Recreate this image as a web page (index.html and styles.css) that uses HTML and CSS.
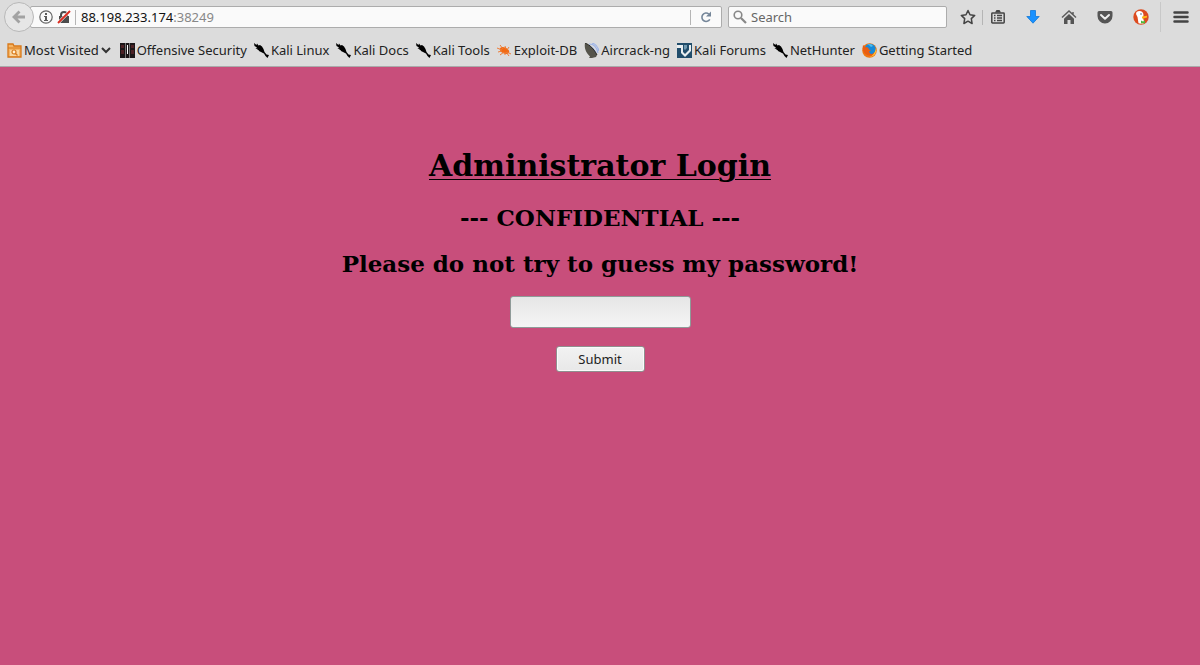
FILE: index.html
```
<!DOCTYPE html>
<html lang="en">
    <head>
        <meta charset="UTF-8">
        <title>Administrator Login</title>
        <link rel="stylesheet" href="styles.css">
    </head>
    <body>
        <svg class="sprite" aria-hidden="true">
            <symbol id="kali" viewBox="0 0 15 15">
                <path d="M0 0l2.500 2L3 .500l1.500 2L6 2l2 1.500L9.500 6l1 3 2 2.500 2.500.500-1.500 3-2-2-1.500-2.500-3-1.500-2-1-.500-1L3 7l1-1-2.500-.500L3 4.500.500 3z"/>
            </symbol>
        </svg>

        <header class="browser">
        <div class="toolbar">
            <button class="back" aria-label="Back">
                <svg width="16" height="16" viewBox="0 0 16 16"><path d="M8.500 2.500L3 8l5.500 5.500M3.500 8H14" fill="none" stroke="#a2a2a2" stroke-width="2.800"/></svg>
            </button>
            <div class="address">
                <svg width="14" height="14" viewBox="0 0 14 14"><circle cx="7" cy="7" r="6.200" fill="none" stroke="#666" stroke-width="1.200"/><path d="M6 3h2v2H6zM5 6h3v4h1v1H5v-1h1V7H5z" fill="#5c5c5c"/></svg>
                <svg width="14" height="14" viewBox="0 0 14 14"><path d="M4 7V5a3 3 0 0 1 6 0v2" fill="none" stroke="#4c4c4c" stroke-width="2"/><path d="M2 6h10v7H2z" fill="#4c4c4c"/><path d="M1 13L13 1" stroke="#fff" stroke-width="3"/><path d="M1 13L13 1" stroke="#d92d21" stroke-width="2"/></svg>
                <span class="line"></span>
                <span class="url"><b>88.198.233.174</b>:38249</span>
                <span class="line"></span>
                <button class="reload" aria-label="Reload">
                    <svg width="12" height="12" viewBox="0 0 12 12"><path d="M9.800 8.300A4.200 4.200 0 1 1 8.800 3" fill="none" stroke="#758699" stroke-width="1.600"/><path d="M11 .500v5H6z" fill="#758699"/></svg>
                </button>
            </div>
            <label class="search">
                <svg width="14" height="14" viewBox="0 0 14 14"><circle cx="5" cy="5" r="3.800" fill="none" stroke="#888" stroke-width="1.600"/><path d="M8 8l5 5" stroke="#888" stroke-width="2.200"/></svg>
                <input type="text" placeholder="Search" aria-label="Search">
            </label>
            <div class="tools">
                <button class="tool star" aria-label="Bookmark this page">
                    <svg width="16" height="16" viewBox="0 0 16 16"><path d="M8 1.500l2 4.300 4.700.600-3.400 3.200.800 4.900L8 12.200l-4.100 2.300.800-4.900-3.400-3.200L6 5.800z" fill="none" stroke="#444" stroke-width="1.500" stroke-linejoin="round"/></svg>
                </button>
                <span class="line"></span>
                <button class="tool list" aria-label="Bookmarks">
                    <svg width="14" height="16" viewBox="0 0 14 16"><path d="M1.500 4h11a.700.700 0 0 1 .700.700v8.600a.700.700 0 0 1-.700.700h-11a.700.700 0 0 1-.700-.700V4.700A.700.700 0 0 1 1.500 4z" fill="none" stroke="#444" stroke-width="1.500"/><path d="M4 3.500L5.500 1h3L10 3.500z" fill="#444"/><path d="M3 6.500h1.500M6 6.500h5M3 9h1.500M6 9h5M3 11.500h1.500M6 11.500h5" stroke="#444" stroke-width="1.300"/></svg>
                </button>
                <button class="tool" aria-label="Downloads">
                    <svg width="14" height="16" viewBox="0 0 14 16"><path d="M4.500 1.500h5v6h3.700L7 14.200.800 7.500h3.700z" fill="#1991ff" stroke="#1078d8" stroke-width=".800"/></svg>
                </button>
                <button class="tool" aria-label="Home">
                    <svg width="16" height="16" viewBox="0 0 16 16"><path d="M1 8.500L8 2l7 6.500M12 3v3" fill="none" stroke="#5c5c5c" stroke-width="1.500"/><path d="M8 5l5 4.700V15H9.500v-4h-3v4H3V9.700z" fill="#555"/></svg>
                </button>
                <button class="tool" aria-label="Pocket">
                    <svg width="16" height="16" viewBox="0 0 16 16"><path d="M2 2h12a1.500 1.500 0 0 1 1.500 1.500V7a7.500 7.500 0 0 1-15 0V3.500A1.500 1.500 0 0 1 2 2z" fill="#555"/><path d="M4 6l4 3.800L12 6" fill="none" stroke="#eee" stroke-width="2" stroke-linecap="round" stroke-linejoin="round"/></svg>
                </button>
                <button class="tool" aria-label="DuckDuckGo">
                    <svg width="16" height="16" viewBox="0 0 16 16"><circle cx="8" cy="8" r="7.700" fill="#dd4b1f"/><path d="M3.500 3c3-2.200 7-.700 7 3l-.500 3 1.500 5c-2 1-4 1-6 .300L4.500 8 3 5z" fill="#fff"/><circle cx="8" cy="5" r=".700" fill="#245"/><path d="M9 7.500l5-.800v1.800l-3.500 1H9z" fill="#fdb813"/><path d="M8 11.500l2 1 2-1v3l-2-.500-2 .500z" fill="#4cba3c"/></svg>
                </button>
                <button class="tool menu" aria-label="Menu">
                    <svg width="16" height="16" viewBox="0 0 16 16"><path d="M1.500 3.500h13M1.500 8h13M1.500 12.500h13" stroke="#444" stroke-width="2.500" stroke-linecap="round"/></svg>
                </button>
            </div>
        </div>

        <nav class="bookmarks">
            <a class="most-visited" href="#">
                <svg width="15" height="15" viewBox="0 0 15 15"><path d="M1 14V1h5l1 2h7v11z" fill="#f5b565" stroke="#d87818" stroke-width="1.300"/><path d="M1 5h13" stroke="#d87818"/><path d="M3 7h9v6H3z" fill="#f9d5a0"/><circle cx="7" cy="9" r="2" fill="#fff0d5" stroke="#d87818" stroke-width="1.200"/><path d="M8.500 10.500l2 2" stroke="#d87818" stroke-width="1.300"/></svg>
                Most Visited
                <svg width="10" height="8" viewBox="0 0 10 8"><path d="M1 2l4 4 4-4" fill="none" stroke="#333" stroke-width="2"/></svg>
            </a>
            <a href="#">
                <svg width="15" height="15" viewBox="0 0 15 15"><path d="M0 0h15v15H0z" fill="#1c1719"/><path d="M1 2h3v3H1zM1 7h3v4H1zM11 2h3v3h-3zM11 7h3v4h-3z" fill="#4d2226"/><path d="M5 0h1v15H5zM9 0h1v15H9z" fill="#777"/><path d="M7 2h1v9H7z" fill="#fff"/></svg>
                Offensive Security
            </a>
            <a href="#"><svg width="15" height="15"><use href="#kali"/></svg>Kali Linux</a>
            <a href="#"><svg width="15" height="15"><use href="#kali"/></svg>Kali Docs</a>
            <a href="#"><svg width="15" height="15"><use href="#kali"/></svg>Kali Tools</a>
            <a href="#">
                <svg width="15" height="15" viewBox="0 0 15 15"><ellipse cx="7.500" cy="7.500" rx="5" ry="3" transform="rotate(25 7.500 7.500)" fill="#f26a13"/><path d="M0 5l5 2M1 9l4-1M3 2l3 4M8 3l1 3M12 4l-2 3M3 12l4-3M8 12v-3M12 13l-3-4M14 11l-4-2" stroke="#ee7d38"/></svg>
                Exploit-DB
            </a>
            <a class="aircrack" href="#">
                <svg width="15" height="15" viewBox="0 0 15 15"><path d="M5 1c5 0 8 4 9 9M8 0c4 1 6 4 7 8M4 3c4 0 6 3 8 7" fill="none" stroke="#9fb5e8" stroke-width="1.200"/><path d="M1 0c5 2 9 6 12 12l-1 2-4 1H5l1-1.500C2 10 0 5 1 0z" fill="#55544b"/><path d="M1 0c5 2 9 6 12 12" fill="none" stroke="#23231f"/></svg>
                Aircrack-ng
            </a>
            <a href="#">
                <svg width="15" height="15" viewBox="0 0 15 15"><path d="M0 0h15v15H0z" fill="#214d6b"/><path d="M0 2h6v7l2 2 4-4V2h2v6l-6 6-4-4V5H0z" fill="#e9eef1"/><path d="M7 2h3v3L8 7 7 6z" fill="#719ab1"/></svg>
                Kali Forums
            </a>
            <a href="#"><svg width="15" height="15"><use href="#kali"/></svg>NetHunter</a>
            <a href="#">
                <svg width="15" height="15" viewBox="0 0 15 15"><circle cx="7.500" cy="7.500" r="7.300" fill="#ef7610"/><circle cx="8.200" cy="6.200" r="5.500" fill="#1689d8"/><path d="M1 2l2 2 3 .500 1 2 2 1-2 1 1 2c2 1 4 0 5-2 0 3-3 5-6 4C2 12 0 7 1 2z" fill="#e95d12"/><path d="M14 5c1 5-2 9-7 9 4-1 6-4 7-9z" fill="#fdc938"/><path d="M5 2c2-2 5-1 6 1L9 4 7 2z" fill="#4fbdea"/></svg>
                Getting Started
            </a>
        </nav>
        </header>

        <main class="page">
            <h1>Administrator Login</h1>
            <h2>--- CONFIDENTIAL ---</h2>
            <h2>Please do not try to guess my password!</h2>
            <form class="login">
                <input class="password" type="password" name="password" aria-label="Password">
                <button class="submit" type="submit">Submit</button>
            </form>
        </main>
    </body>
</html>
```

FILE: styles.css
```
* {
    box-sizing: border-box;
}

body {
    margin: 0;
    min-height: 100vh;
    background: #c84e7b;
    font-family: "DejaVu Serif", serif;
    color: #000;
}

button {
    padding: 0;
    border: none;
    background: none;
}

svg {
    flex: none;
}

.sprite {
    display: none;
}

.browser {
    background: #dcdcdc;
    border-bottom: 1px solid #aaa;
    font-family: "Noto Sans", sans-serif;
    font-size: 13px;
    color: #222;
}

.toolbar {
    display: flex;
    align-items: center;
    height: 34px;
    padding-left: 4px;
}

.back {
    display: flex;
    align-items: center;
    justify-content: center;
    flex: none;
    width: 30px;
    height: 30px;
    border: 1px solid #b8b8b8;
    border-radius: 50%;
    background: #e6e6e6;
    z-index: 1;
}

.address,
.search {
    display: flex;
    align-items: center;
    height: 22px;
    border: 1px solid #acacac;
    border-radius: 2px;
    background: #fafafa;
}

.address {
    flex: 1;
    gap: 4px;
    margin-left: -4px;
    padding-left: 8px;
}

.line {
    width: 1px;
    height: 15px;
    background: #b5b5b5;
}

.url {
    flex: 1;
    padding-left: 1px;
    color: #888;
}

.url b {
    font-weight: normal;
    color: #111;
}

.reload {
    display: flex;
    justify-content: center;
    width: 22px;
    margin-right: 4px;
}

.search {
    width: 219px;
    margin-left: 6px;
    padding-left: 4px;
    gap: 4px;
}

.search input {
    flex: 1;
    min-width: 0;
    padding: 0;
    border: none;
    outline: none;
    background: none;
    font: inherit;
}

.search input::placeholder {
    color: #666;
    opacity: 1;
}

.tools {
    display: flex;
    align-items: center;
    margin-left: 6px;
}

.tool {
    display: flex;
    align-items: center;
    justify-content: center;
    width: 36px;
    height: 30px;
}

.star,
.list {
    width: 29px;
}

.list {
    margin-right: 3px;
}

.menu {
    width: 40px;
    margin-left: 1px;
    border-left: 1px solid #c8c8c8;
}

.bookmarks {
    display: flex;
    align-items: center;
    gap: 7px;
    height: 32px;
    padding-left: 7px;
}

.bookmarks a {
    display: flex;
    align-items: center;
    gap: 2px;
    color: inherit;
    text-decoration: none;
    white-space: nowrap;
}

.bookmarks .most-visited {
    margin-right: 2px;
}

.page {
    padding: 81px 8px 0;
    text-align: center;
}

h1 {
    margin: 0 0 20px;
    font-size: 30px;
    line-height: 36px;
    text-decoration: underline;
    text-decoration-thickness: 1px;
    text-underline-offset: 3px;
}

h2 {
    margin: 0 0 18px;
    font-size: 23px;
    line-height: 28px;
}

.login {
    display: flex;
    flex-direction: column;
    align-items: center;
    gap: 18px;
}

.password {
    width: 181px;
    height: 32px;
    padding: 0 8px;
    border: 1px solid #8f9a98;
    border-radius: 3px;
    background: linear-gradient(#e6e6e6, #f5f5f5);
}

.submit {
    width: 89px;
    height: 26px;
    border: 1px solid #8f8f8f;
    border-radius: 3px;
    background: linear-gradient(#f2f2f2, #e8e8e8);
    box-shadow: inset 0 0 0 1px #fafafa;
    font-family: "Noto Sans", sans-serif;
    font-size: 13px;
    color: #222;
}
```
